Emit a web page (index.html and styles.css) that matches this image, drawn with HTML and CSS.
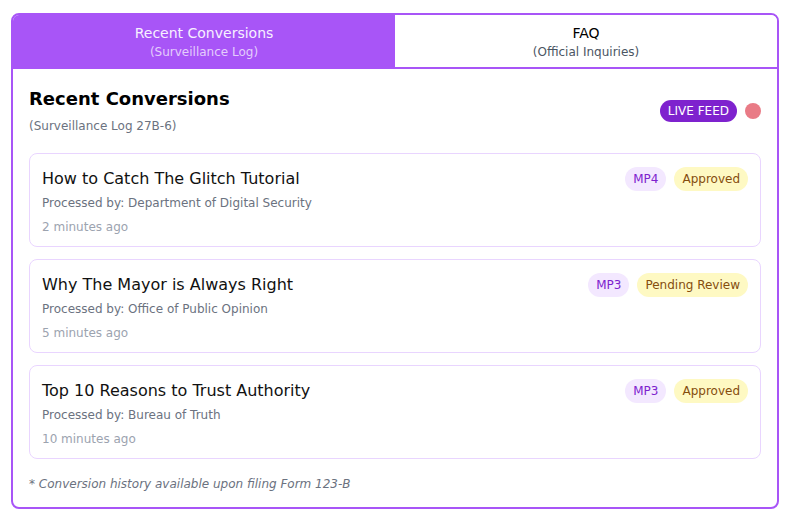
FILE: index.html
```html
<!DOCTYPE html>
<html>
<head>
<meta charset="utf-8">
<link rel="stylesheet" href="styles.css">
</head>
<body>
<div class="panel">
  <div class="tabs">
    <button class="tab active">
      <span class="tab-title">Recent Conversions</span>
      <span class="tab-sub">(Surveillance Log)</span>
    </button>
    <button class="tab">
      <span class="tab-title">FAQ</span>
      <span class="tab-sub">(Official Inquiries)</span>
    </button>
  </div>
  <div class="content">
    <div class="header">
      <div>
        <h2 class="heading">Recent Conversions</h2>
        <p class="subheading">(Surveillance Log 27B-6)</p>
      </div>
      <div class="live">
        <span class="live-badge">LIVE FEED</span>
        <span class="dot"></span>
      </div>
    </div>
    <div class="list">
      <div class="card">
        <div class="card-main">
          <div class="card-title">How to Catch The Glitch Tutorial</div>
          <div class="card-by">Processed by: Department of Digital Security</div>
          <div class="card-time">2 minutes ago</div>
        </div>
        <div class="badges">
          <span class="badge fmt">MP4</span>
          <span class="badge status">Approved</span>
        </div>
      </div>
      <div class="card">
        <div class="card-main">
          <div class="card-title">Why The Mayor is Always Right</div>
          <div class="card-by">Processed by: Office of Public Opinion</div>
          <div class="card-time">5 minutes ago</div>
        </div>
        <div class="badges">
          <span class="badge fmt">MP3</span>
          <span class="badge status">Pending Review</span>
        </div>
      </div>
      <div class="card">
        <div class="card-main">
          <div class="card-title">Top 10 Reasons to Trust Authority</div>
          <div class="card-by">Processed by: Bureau of Truth</div>
          <div class="card-time">10 minutes ago</div>
        </div>
        <div class="badges">
          <span class="badge fmt">MP3</span>
          <span class="badge status">Approved</span>
        </div>
      </div>
    </div>
    <p class="footnote">* Conversion history available upon filing Form 123-B</p>
  </div>
</div>
</body>
</html>
```
FILE: styles.css
```css
* { box-sizing: border-box; }
body {
  margin: 0;
  background: #ffffff;
  font-family: "DejaVu Sans", sans-serif;
  color: #111827;
}
.panel {
  margin: 13px 14px 0 11px;
  border: 2px solid #a855f7;
  border-radius: 8px;
  overflow: hidden;
  background: #fff;
}
.tabs {
  display: flex;
  border-bottom: 2px solid #a855f7;
}
.tab {
  flex: 1;
  display: flex;
  flex-direction: column;
  align-items: center;
  padding: 8px 0 7px;
  border: none;
  background: #fff;
  font-family: "DejaVu Sans", sans-serif;
  color: #000;
  cursor: pointer;
}
.tab.active {
  background: #a855f7;
  color: #f7f0ff;
}
.tab-title {
  font-size: 14px;
  line-height: 20px;
}
.tab-sub {
  margin-top: 1px;
  font-size: 12px;
  line-height: 16px;
  color: #4b5563;
}
.tab.active .tab-sub { color: #e4cdfc; }
.content {
  padding: 16px 16px 15px 16px;
}
.header {
  display: flex;
  justify-content: space-between;
  align-items: center;
  margin-bottom: 17px;
}
.heading {
  margin: 0;
  font-size: 18px;
  line-height: 28px;
  font-weight: bold;
  color: #000;
}
.subheading {
  margin: 3px 0 0;
  font-size: 12px;
  line-height: 20px;
  color: #6b7280;
}
.live {
  display: flex;
  align-items: center;
  gap: 8px;
}
.live-badge {
  background: #7e22ce;
  color: #fff;
  font-size: 12px;
  line-height: 16px;
  padding: 3px 8px;
  border-radius: 999px;
}
.dot {
  width: 16px;
  height: 16px;
  border-radius: 50%;
  background: #e97b86;
}
.list {
  display: flex;
  flex-direction: column;
  gap: 12px;
}
.card {
  display: flex;
  justify-content: space-between;
  align-items: flex-start;
  border: 1px solid #e9d5ff;
  border-radius: 8px;
  padding: 13px 12px 11px;
}
.card-title {
  font-size: 16px;
  line-height: 24px;
  color: #111;
}
.card-by {
  margin-top: 4px;
  font-size: 12px;
  line-height: 16px;
  color: #6b7280;
}
.card-time {
  margin-top: 8px;
  font-size: 12px;
  line-height: 16px;
  color: #9ca3af;
}
.badges {
  display: flex;
  gap: 8px;
}
.badge {
  font-size: 12px;
  line-height: 16px;
  padding: 4px 8px;
  border-radius: 999px;
}
.badge.fmt {
  background: #f3e8ff;
  color: #7e22ce;
}
.badge.status {
  background: #fef9c3;
  color: #854d0e;
}
.footnote {
  margin: 17px 0 0;
  font-size: 12px;
  line-height: 16px;
  font-style: italic;
  color: #6b7280;
}
```
